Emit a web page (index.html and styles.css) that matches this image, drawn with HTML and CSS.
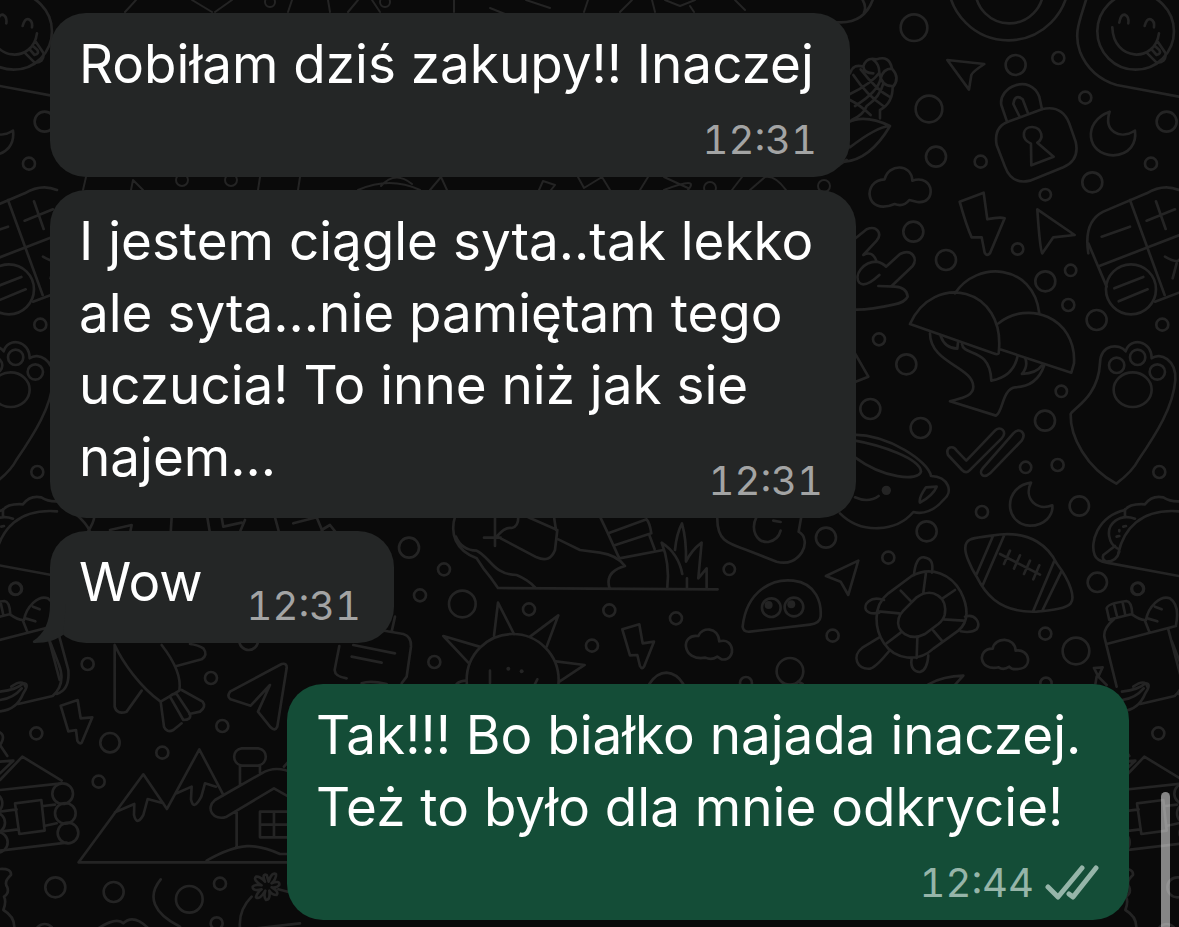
FILE: index.html
```
<!DOCTYPE html>
<html lang="pl">

<head>
    <meta charset="UTF-8">
    <meta name="viewport" content="width=device-width, initial-scale=1.0">
    <title>Czat</title>
    <link rel="stylesheet" href="styles.css">
</head>

<body>
    <svg class="wallpaper" viewBox="0 0 1179 927" preserveAspectRatio="xMidYMid slice" aria-hidden="true">
        <defs>
            <g id="doodles">
                <!-- corn, lock, smiley -->
                <g transform="translate(840 0) scale(.3333)">
                    <circle cx="222" cy="83" r="40" />
                    <circle cx="527" cy="195" r="30" />
                    <circle cx="655" cy="174" r="18" />
                    <circle cx="267" cy="327" r="40" />
                    <circle cx="736" cy="293" r="18" />
                    <circle cx="980" cy="365" r="30" />
                    <circle cx="288" cy="470" r="30" />
                    <circle cx="422" cy="485" r="18" />
                    <circle cx="933" cy="491" r="18" />
                    <circle cx="757" cy="547" r="30" />
                    <circle cx="616" cy="584" r="17" />
                    <circle cx="220" cy="695" r="30" />
                    <circle cx="505" cy="-60" r="181" />
                    <circle cx="508" cy="-32" r="102" />
                    <path d="M-15 66Q70 75 98 0M68 0Q80 20 72 38" />
                    <path d="M322 180L433 192Q398 215 394 225L387 269Z" />
                    <circle cx="887" cy="94" r="115" />
                    <path d="M838 68Q842 42 855 44Q868 50 865 70M914 78Q920 54 932 58Q945 64 942 82M817 82C820 185 945 190 957 100M920 158L950 188Q978 190 977 160L954 126M935 148L950 165Q965 162 958 150L945 138" />
                    <path d="M738 0C720 60 700 100 720 155Q750 230 830 255L1017 290" />
                    <path d="M30 220Q40 190 70 200Q78 170 110 178Q148 165 156 206Q182 235 158 262Q158 310 120 330V355M70 200Q72 220 100 220M118 218Q125 260 158 258M40 225Q80 285 130 318M62 208Q110 270 148 290M30 300Q60 315 92 345M30 282Q95 250 118 218Q118 192 100 180M45 318Q115 275 122 235Q130 205 156 206M35 360Q70 345 80 318Q120 290 130 250" />
                    <path d="M20 370Q70 340 150 378Q90 480 10 486M150 378Q110 380 30 442L20 430M-10 500L20 480" />
                    <path d="M500 362L484 315C475 260 570 220 598 290L606 328M538 348L520 312Q525 280 548 298L564 340M508 364L608 327Q665 315 687 368L707 425Q720 480 670 502L570 542Q515 555 495 500L470 435Q460 380 508 364Z" />
                    <path d="M573 431C540 415 548 380 577 381C608 384 612 416 592 428L641 470L574 496Z" />
                    <path d="M809 335C725 365 740 465 820 466C870 463 890 430 885 392C840 420 790 395 809 335Z" />
                    <path d="M134 538C145 490 215 490 217 542C285 520 290 615 232 606L208 600Q190 622 164 612C75 650 65 540 134 538Z" />
                    <path d="M359 605L431 578L442 658Q480 650 494 655L450 760Q440 770 434 758L425 712L395 712Q380 680 359 605Z" />
                    <path d="M592 628L704 705L640 712L607 760Q600 750 592 628Z" />
                    <path d="M745 760Q730 665 790 635L920 580Q970 550 1017 570M870 600L974 885M778 798L1017 706M785 710L870 680M948 604L977 687M920 662L1005 628M975 770Q1010 790 1017 780M1010 790L998 835M745 730L800 860M945 905L1017 878" />
                    <circle cx="873" cy="868" r="75" />
                    <path d="M823 865L910 831M836 904L923 868" />
                </g>

                <!-- hand, mushrooms, paw -->
                <g transform="translate(840 220) scale(.3333)">
                    <circle cx="318" cy="120" r="30" />
                    <circle cx="533" cy="87" r="17" />
                    <circle cx="692" cy="151" r="17" />
                    <circle cx="616" cy="184" r="30" />
                    <circle cx="685" cy="255" r="18" />
                    <circle cx="770" cy="300" r="30" />
                    <circle cx="967" cy="314" r="18" />
                    <circle cx="117" cy="358" r="18" />
                    <circle cx="199" cy="433" r="30" />
                    <circle cx="664" cy="514" r="17" />
                    <circle cx="91" cy="567" r="30" />
                    <circle cx="242" cy="624" r="30" />
                    <circle cx="615" cy="602" r="30" />
                    <path d="M40 60L80 28C110 15 128 40 110 62L70 105Q98 90 110 125M110 125C70 125 40 165 58 188Q75 205 118 165M110 125Q130 130 138 140L180 102C215 85 235 115 218 138L155 198M115 198L165 200Q200 202 203 230Q195 248 160 254Q90 270 45 269M45 400L85 470L45 486" />
                    <path d="M210 312C280 155 500 200 476 400Q473 405 460 400ZM345 220C410 120 580 130 598 280M476 310C560 240 710 290 702 430L694 458L480 388" />
                    <path d="M270 340C270 430 400 440 400 500C400 530 360 535 330 544L468 587C490 575 485 510 525 502Q590 500 612 438M302 348Q315 385 352 386L354 368M366 372C370 410 450 380 454 482Q520 470 533 408M556 415Q565 440 546 462Q590 460 606 436" />
                    <path d="M692 582C700 565 775 530 780 430C782 370 840 370 857 394C870 350 935 360 935 415C960 395 1010 420 1006 480C1000 560 950 640 895 720C880 750 850 775 829 791C740 745 690 650 692 582Z" />
                    <ellipse cx="878" cy="509" rx="57" ry="52" />
                    <circle cx="830" cy="436" r="23" />
                    <circle cx="893" cy="412" r="23" />
                    <circle cx="952" cy="456" r="23" />
                </g>

                <!-- cup, football, turtle, taco, bag -->
                <g transform="translate(840 420) scale(.3333)">
                    <circle cx="557" cy="142" r="17" />
                    <circle cx="653" cy="135" r="18" />
                    <circle cx="958" cy="156" r="18" />
                    <circle cx="426" cy="276" r="18" />
                    <circle cx="718" cy="258" r="29" />
                    <circle cx="260" cy="334" r="30" />
                    <circle cx="145" cy="413" r="18" />
                    <circle cx="772" cy="487" r="29" />
                    <circle cx="892" cy="507" r="18" />
                    <circle cx="616" cy="641" r="18" />
                    <circle cx="708" cy="693" r="40" />
                    <circle cx="618" cy="790" r="17" />
                    <path d="M40 44C150 45 265 125 273 168C325 170 342 215 310 240C285 270 250 285 220 276C170 335 65 345 0 280M45 62C120 75 240 115 243 155C235 185 130 175 45 112M45 232Q85 250 116 228M258 202L290 200Q280 225 240 248Q235 235 258 202Z" />
                    <circle class="solid" cx="139" cy="211" r="14" />
                    <path d="M324 105C315 80 340 75 350 92L379 122L465 32C480 15 505 35 485 55L388 152Q378 162 366 150ZM428 145L520 40C540 20 560 40 545 62L450 160C430 178 415 160 428 145Z" />
                    <path d="M573 188C490 200 490 310 568 317C615 318 640 285 637 256C590 275 550 235 573 188Z" />
                    <path d="M376 385C375 350 410 355 455 347C580 325 630 390 650 430C695 490 705 535 692 550C680 565 640 570 590 575C470 580 430 510 410 470C390 440 375 400 376 385ZM459 348L410 462M493 345L427 498M644 420L580 572M664 455L608 570M480 402L600 464M510 392L492 432M540 406L522 446M570 422L552 462M598 436L580 478" />
                    <path d="M145 520L215 468C275 435 335 465 362 515C385 560 388 605 355 632L280 686C235 728 165 720 132 670C105 630 95 560 145 520ZM190 572L230 532C275 500 325 530 314 585Q310 600 295 612L255 642C210 665 165 635 176 595Q180 582 190 572ZM258 458L250 518M182 512L214 545M345 510L308 535M115 574L178 580M310 598L370 602M280 632L308 665M232 655L230 714M182 638L140 670" />
                    <path d="M222 465C225 430 235 410 252 412C275 415 280 430 276 458M132 540C90 525 70 555 78 570Q90 585 118 578M375 590C405 580 425 610 410 628Q395 640 362 634M118 652L66 684C35 708 50 750 90 746Q108 742 150 690M215 716C210 745 225 757 240 756Q262 750 265 706" />
                    <path d="M458 686C465 650 525 650 527 692C570 685 580 745 535 747Q515 750 508 740Q490 752 476 742C415 755 410 685 458 686Z" />
                    <path d="M265 793Q310 768 370 767L340 800" />
                    <path d="M1017 244Q990 245 970 232Q935 225 915 253Q870 250 855 270C770 290 750 370 764 405Q770 422 800 428L1017 468M835 400C850 330 900 265 1017 274M855 268V290M885 296C840 280 800 310 808 350Q812 375 832 385M825 378L790 405Q785 420 800 425Q830 425 838 395M838 330V334M850 320L858 318M830 350L838 348" />
                    <path d="M808 600L800 565Q803 550 860 543Q875 545 877 582L812 598M823 557L832 592M848 548L856 585M822 598Q790 625 793 650L830 800M877 584Q900 600 914 600L928 635M918 600C925 560 960 525 990 535Q1020 555 1008 615M800 672L1008 618M985 628L1025 780M945 560L965 568M925 596L952 604M762 744L788 742L775 770ZM775 770L800 795M765 800L770 770M880 800Q915 775 922 800" />
                </g>

                <!-- dino, sun, bolt, cloud -->
                <g transform="translate(380 500) scale(.3333)">
                    <circle cx="87" cy="143" r="30" />
                    <circle cx="192" cy="208" r="18" />
                    <circle cx="120" cy="286" r="18" />
                    <circle cx="247" cy="312" r="40" />
                    <circle cx="447" cy="328" r="18" />
                    <circle cx="688" cy="331" r="18" />
                    <circle cx="888" cy="355" r="18" />
                    <circle cx="636" cy="437" r="18" />
                    <circle cx="163" cy="486" r="18" />
                    <circle cx="1048" cy="208" r="17" />
                    <circle cx="1358" cy="407" r="18" />
                    <circle cx="1338" cy="113" r="30" />
                    <circle cx="1230" cy="514" r="40" />
                    <circle cx="1098" cy="549" r="18" />
                    <path d="M808 552Q830 518 860 518Q890 520 910 552" />
                    <path d="M225 50C210 100 225 150 290 175L310 205Q335 235 354 264L1013 268M228 110Q245 150 290 152C330 170 340 225 410 225Q445 240 465 262M345 50V138M312 113H362M350 110Q375 80 395 84Q415 80 415 50M362 115L470 172Q510 190 525 150L532 90L445 52M522 50L528 90M535 118L600 150L660 158Q710 165 735 198Q675 215 688 262" />
                    <path d="M660 50L680 92L718 175L850 150M685 100L800 58Q810 70 814 100L704 136M808 105L824 148M862 262Q870 190 845 128Q895 160 907 222M885 150Q890 100 906 70Q920 120 918 185Q935 150 965 128L955 235L980 205L980 264M921 235V264" />
                    <path d="M1012 50C1010 120 1040 130 1100 150L1190 185C1260 205 1300 120 1256 95L1264 50M1130 50C1110 90 1130 128 1165 126Q1195 120 1202 92M1180 62L1202 66" />
                    <circle cx="398" cy="540" r="138" />
                    <path d="M342 408L354 308L402 402M450 410L535 346L500 440M528 484L614 495L538 545M265 488L190 408L298 440M330 512V550M472 538L465 552M230 552Q240 542 260 542" />
                    <circle class="solid" cx="385" cy="506" r="6" />
                    <circle class="solid" cx="425" cy="514" r="6" />
                    <path d="M727 388L778 373L788 430L822 425L792 500Q786 510 780 498L772 465L750 466Z" />
                    <path d="M955 408C965 380 1015 380 1018 424C1065 410 1070 485 1025 478L1012 470Q995 482 976 473C905 485 900 400 955 408Z" />
                    <path d="M1088 380C1100 270 1180 235 1240 242C1310 250 1325 310 1322 350Q1320 370 1290 374L1110 395Q1090 397 1088 380ZM1338 228L1435 182L1405 285L1382 245ZM1255 545L1268 552" />
                    <circle cx="1174" cy="323" r="28" />
                    <circle cx="1242" cy="321" r="28" />
                    <circle class="solid" cx="1166" cy="315" r="12" />
                    <circle class="solid" cx="1234" cy="313" r="12" />
                    <path d="M35 395L45 350M0 390L70 402Q95 410 93 440L80 530L65 550" />
                </g>

                <!-- carrot rocket, paper plane -->
                <g transform="translate(0 520) scale(.3333)">
                    <circle cx="48" cy="206" r="18" />
                    <circle cx="263" cy="432" r="18" />
                    <circle cx="633" cy="474" r="18" />
                    <circle cx="746" cy="362" r="28" />
                    <path d="M225 -20Q260 10 270 35M270 -35Q300 -20 262 38M330 30L395 15L390 40M515 -8L512 40M622 -8L630 40M665 -8L670 20L725 8M735 0L720 35M825 -8L838 40M880 10L950 -8L970 40M965 30L990 15L1010 40" />
                    <path d="M150 365L175 430Q200 490 158 528L55 552M178 350L205 450Q210 510 170 522M0 515Q50 510 70 490Q90 490 70 520Q50 570 0 574M0 540Q40 535 65 505" />
                    <path d="M344 375V560Q350 585 380 575L425 512M344 375C370 430 420 500 482 545L538 512C545 470 520 420 485 375M530 438L605 418Q625 405 610 385Q595 375 570 372M482 545L492 620Q500 640 520 630L545 610M545 510L608 545Q620 560 600 575L568 582M510 530L550 600Q575 600 570 582L530 522Q515 520 510 530Z" />
                    <path d="M690 515L845 432Q862 428 860 445L832 620Q825 635 812 622L774 575L810 495L752 557L692 538Q680 530 690 515ZM1018 378L1004 450Q1005 470 1040 475M1055 410L1145 428M1060 375L1185 400M1085 490Q1110 480 1160 492" />
                </g>

                <!-- log cabin, mountains, house -->
                <g transform="translate(0 680) scale(.3333)">
                    <circle cx="109" cy="160" r="18" />
                    <circle cx="330" cy="188" r="29" />
                    <circle cx="487" cy="218" r="18" />
                    <circle cx="667" cy="138" r="18" />
                    <circle cx="296" cy="305" r="18" />
                    <circle cx="166" cy="622" r="30" />
                    <circle cx="341" cy="636" r="30" />
                    <circle cx="568" cy="658" r="40" />
                    <circle cx="660" cy="611" r="18" />
                    <circle cx="650" cy="730" r="18" />
                    <circle cx="134" cy="760" r="28" />
                    <path d="M182 77L233 60L242 115L277 112L245 188Q238 194 232 182L228 150L205 154Z" />
                    <path d="M0 300L67 230L185 302M0 330L185 310M0 395L50 388M130 378L165 374M0 455L55 448M132 438L170 430M0 512L200 488M45 370L124 360L134 452L58 462ZM0 245L40 242L0 280M-5 155Q20 165 0 195L22 228" />
                    <circle cx="188" cy="341" r="31" />
                    <circle cx="196" cy="400" r="31" />
                    <circle cx="204" cy="459" r="31" />
                    <circle cx="-24" cy="370" r="31" />
                    <circle cx="-16" cy="428" r="31" />
                    <circle cx="-8" cy="487" r="31" />
                    <path d="M236 547L430 283L501 387L598 208L670 345M236 547H880M345 397L403 372L402 405Q410 440 430 405L443 357L490 370M530 340L575 320L573 358Q580 395 604 350L615 310L648 320" />
                    <path d="M880 280C840 260 810 265 785 280L645 360C615 385 640 425 680 410L822 325L880 358M725 205H775C805 210 805 250 775 257H725C695 250 695 210 725 205ZM720 258V315M780 258V280M710 396V502M620 542C720 485 770 490 840 522H880M780 395H880M780 395V472H880M822 395V472M780 434H880M852 260L870 240" />
                    <path d="M0 567Q35 565 33 585Q10 605 22 622Q28 640 12 650Q20 665 10 690Q45 710 43 745M482 598C440 650 460 700 540 740M295 745Q350 710 370 730Q400 700 445 745M720 745Q715 690 755 650M835 628L880 640M770 745L900 730" />
                    <path d="M795 605Q785 580 800 585L806 605Q815 575 828 582Q830 595 815 610Q840 600 838 615Q830 625 815 622Q838 635 830 645Q815 645 808 632Q812 660 798 660Q790 650 796 632Q780 660 768 652Q770 640 785 628Q758 635 758 620Q765 612 785 616Q758 600 768 590Q780 588 795 605Z" />
                </g>

                <!-- the narrow gaps above and between the messages -->
                <path d="M125 12L136 0M192 0L212 12M232 0L215 12M288 12L292 0M328 0L330 12M348 12L358 0M372 0L380 12M454 0V12M526 0L550 8M490 8L505 14M584 12L588 0M620 12L632 0M652 0L655 12M665 0L680 6L695 0M690 6L694 12M735 0L745 10" />
                <path d="M86 177L83 190M131 190L133 180L143 190M260 177L258 190M300 177L298 190M358 190Q390 176 420 190M381 186Q395 170 412 184M430 190L441 177L447 190M539 190L543 181L555 185L551 190M578 177L584 188L602 177L610 190M648 177L640 190M664 190Q700 176 688 190M664 177L688 188M732 190L742 177M750 190L765 177Q775 175 786 190" />
                <circle cx="182" cy="180" r="6" />
                <circle cx="231" cy="180" r="6" />
                <circle cx="710" cy="188" r="6" />
                <circle cx="824" cy="186" r="6" />
                <circle cx="270" cy="2" r="5" />
                <circle cx="385" cy="2" r="5" />
            </g>
        </defs>
        <use href="#doodles" />
        <use href="#doodles" x="-1122" />
        <use href="#doodles" x="1122" />
    </svg>

    <main class="chat">
        <article class="bubble bubble-first">
            <p class="text">Robiłam dziś zakupy!! Inaczej</p>
            <time class="time">12:31</time>
        </article>

        <article class="bubble bubble-long">
            <p class="text">I jestem ciągle syta..tak lekko<br>ale syta...nie pamiętam tego<br>uczucia! To inne niż jak sie<br>najem...</p>
            <time class="time">12:31</time>
        </article>

        <article class="bubble bubble-short">
            <p class="text">Wow</p>
            <time class="time">12:31</time>
            <svg class="tail" viewBox="0 0 34 40" aria-hidden="true">
                <path d="M18 0C18 18 12 30 1 37Q0 39 3 39C15 39 24 36 31 31L34 0Z" />
            </svg>
        </article>

        <article class="bubble bubble-out">
            <p class="text">Tak!!! Bo białko najada inaczej.<br>Też to było dla mnie odkrycie!</p>
            <div class="status">
                <time class="time">12:44</time>
                <svg class="ticks" viewBox="0 0 54 36" role="img" aria-label="Dostarczono">
                    <path d="M3 22L13 32L37 3M24 29L28 32L51 3" />
                </svg>
            </div>
        </article>
    </main>

    <div class="scrollbar"></div>
</body>

</html>
```
FILE: styles.css
```
* {
    margin: 0;
    padding: 0;
    box-sizing: border-box;
}

body {
    min-height: 100vh;
    background-color: #0a0a0a;
    font-family: Inter, "Liberation Sans", sans-serif;
}

/* background doodles */
.wallpaper {
    position: fixed;
    inset: 0;
    width: 100%;
    height: 100%;
    fill: none;
    stroke: #242424;
    stroke-width: 2;
    stroke-linecap: round;
    stroke-linejoin: round;
}

.wallpaper g g {
    stroke-width: 8;
}

.wallpaper .solid {
    fill: #242424;
    stroke: none;
}

/* messages */
.chat {
    position: relative;
    display: flex;
    flex-direction: column;
    align-items: flex-start;
    gap: 13px;
    padding: 13px 50px 6px;
}

.bubble {
    position: relative;
    display: grid;
    row-gap: 16px;
    max-width: 100%;
    padding: 15px 30px 13px 29px;
    border-radius: 36px;
    background-color: #242626;
    color: #fff;
}

.text {
    font-size: 53px;
    line-height: 72px;
}

.time {
    justify-self: end;
    align-self: end;
    margin-right: 3px;
    font-size: 40px;
    line-height: 48px;
    font-variant-numeric: tabular-nums;
    color: #a3a4a4;
}

.bubble-first {
    width: 800px;
}

/* the time shares the last line of the text */
.bubble-long {
    width: 806px;
}

.bubble-long .text,
.bubble-long .time {
    grid-area: 1 / 1;
}

.bubble-long .text,
.bubble-short .text {
    padding-bottom: 12px;
}

.bubble-short {
    grid-template-columns: auto auto;
    width: 344px;
}

.tail {
    position: absolute;
    left: -18px;
    bottom: -1px;
    width: 34px;
    height: 40px;
    fill: #242626;
}

.bubble-out {
    align-self: flex-end;
    width: 842px;
    margin-top: 28px;
    background-color: #144d37;
}

.status {
    display: flex;
    justify-content: flex-end;
    align-items: center;
    gap: 8px;
}

.bubble-out .time {
    color: #96b5a9;
}

.ticks {
    width: 54px;
    height: 36px;
    fill: none;
    stroke: #96b5a9;
    stroke-width: 5;
    stroke-linecap: round;
    stroke-linejoin: round;
}

.scrollbar {
    position: fixed;
    right: 9px;
    bottom: -10px;
    width: 9px;
    height: 145px;
    border-radius: 5px;
    background-color: rgba(255, 255, 255, 0.5);
}
```
